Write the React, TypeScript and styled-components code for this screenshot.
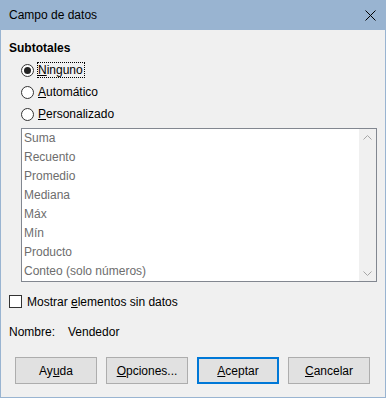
import React from "react";
import styled, { createGlobalStyle } from "styled-components";

const Global = createGlobalStyle`
  html, body { margin: 0; padding: 0; background: #f0f0f0; }
  body { font-family: "Segoe UI", "Liberation Sans", Arial, sans-serif; font-size: 12px; color: #000; }
`;

const Window = styled.div`
  width: 386px;
  height: 398px;
  box-sizing: border-box;
  border: 1px solid #99b4d1;
  border-top: none;
  background: #f0f0f0;
  display: flex;
  flex-direction: column;
`;

const TitleBar = styled.div`
  height: 30px;
  margin: 0 -1px;
  background: #99b4d1;
  display: flex;
  align-items: center;
  justify-content: space-between;
  padding: 0 10px 0 9px;
  box-sizing: border-box;
  font-size: 12px;
  color: #000;
`;

const Content = styled.div`
  flex: 1;
  display: flex;
  flex-direction: column;
  padding: 10px 8px 0 8px;
`;

const SectionTitle = styled.div`
  font-weight: bold;
  line-height: 16px;
  height: 16px;
`;

const RadioGroup = styled.div`
  display: flex;
  flex-direction: column;
  margin: 3px 0 0 12px;
`;

const RadioRow = styled.label`
  height: 22px;
  display: flex;
  align-items: center;
  gap: 3px;
`;

const RadioCircle = styled.span<{ $checked?: boolean }>`
  width: 13px;
  height: 13px;
  box-sizing: border-box;
  border-radius: 50%;
  border: 1px solid #333;
  background: #fff;
  display: flex;
  align-items: center;
  justify-content: center;
  &::after {
    content: "";
    width: 7px;
    height: 7px;
    border-radius: 50%;
    background: #222;
    display: ${(p) => (p.$checked ? "block" : "none")};
  }
`;

const LabelText = styled.span<{ $focus?: boolean }>`
  line-height: 14px;
  padding: 0 1px 0 0;
  border: 1px dotted ${(p) => (p.$focus ? "#000" : "transparent")};
`;

const U = styled.span`
  text-decoration: underline;
`;

const ListBox = styled.div`
  margin: 3px 0 0 12px;
  height: 154px;
  box-sizing: border-box;
  border: 1px solid #828790;
  background: #fff;
  display: flex;
`;

const ListItems = styled.div`
  flex: 1;
  display: flex;
  flex-direction: column;
  padding-left: 2px;
`;

const ListItem = styled.div`
  height: 19px;
  line-height: 19px;
  color: #6d6d6d;
`;

const ScrollBar = styled.div`
  width: 17px;
  background: #f0f0f0;
  display: flex;
  flex-direction: column;
  justify-content: space-between;
  align-items: center;
  padding: 6px 0 5px;
  box-sizing: border-box;
`;

const CheckRow = styled.label`
  margin-top: 13px;
  height: 13px;
  display: flex;
  align-items: center;
  gap: 5px;
`;

const CheckBox = styled.span`
  width: 13px;
  height: 13px;
  box-sizing: border-box;
  border: 1px solid #333;
  background: #fff;
`;

const NameRow = styled.div`
  margin-top: 16px;
  display: flex;
  line-height: 16px;
`;

const NameLabel = styled.span`
  width: 59px;
`;

const ButtonRow = styled.div`
  margin: 17px 0 0 6px;
  display: flex;
  gap: 9px;
`;

const Button = styled.button<{ $default?: boolean }>`
  width: 82px;
  height: 27px;
  box-sizing: border-box;
  font-family: inherit;
  font-size: 12px;
  color: #000;
  background: #e1e1e1;
  border: ${(p) => (p.$default ? "2px solid #0078d7" : "1px solid #adadad")};
  padding: 0;
  border-radius: 0;
`;

const Chevron = ({ up }: { up?: boolean }) => (
  <svg width="9" height="5" viewBox="0 0 9 5">
    <polyline
      points={up ? "0.5,4.5 4.5,0.5 8.5,4.5" : "0.5,0.5 4.5,4.5 8.5,0.5"}
      fill="none"
      stroke="#a6a6a6"
      strokeWidth="1"
    />
  </svg>
);

const items = [
  "Suma",
  "Recuento",
  "Promedio",
  "Mediana",
  "Máx",
  "Mín",
  "Producto",
  "Conteo (solo números)",
];

export default function App() {
  return (
    <>
      <Global />
      <Window>
        <TitleBar>
          <span>Campo de datos</span>
          <svg width="11" height="11" viewBox="0 0 11 11">
            <path d="M0.5 0.5 L10.5 10.5 M10.5 0.5 L0.5 10.5" stroke="#000" strokeWidth="1" />
          </svg>
        </TitleBar>
        <Content>
          <SectionTitle>Subtotales</SectionTitle>
          <RadioGroup>
            <RadioRow>
              <RadioCircle $checked />
              <LabelText $focus>
                <U>N</U>inguno
              </LabelText>
            </RadioRow>
            <RadioRow>
              <RadioCircle />
              <LabelText>
                <U>A</U>utomático
              </LabelText>
            </RadioRow>
            <RadioRow>
              <RadioCircle />
              <LabelText>
                <U>P</U>ersonalizado
              </LabelText>
            </RadioRow>
          </RadioGroup>
          <ListBox>
            <ListItems>
              {items.map((it) => (
                <ListItem key={it}>{it}</ListItem>
              ))}
            </ListItems>
            <ScrollBar>
              <Chevron up />
              <Chevron />
            </ScrollBar>
          </ListBox>
          <CheckRow>
            <CheckBox />
            <span>
              Mostrar <U>e</U>lementos sin datos
            </span>
          </CheckRow>
          <NameRow>
            <NameLabel>Nombre:</NameLabel>
            <span>Vendedor</span>
          </NameRow>
          <ButtonRow>
            <Button>
              Ay<U>u</U>da
            </Button>
            <Button>
              <U>O</U>pciones...
            </Button>
            <Button $default>
              <U>A</U>ceptar
            </Button>
            <Button>
              <U>C</U>ancelar
            </Button>
          </ButtonRow>
        </Content>
      </Window>
    </>
  );
}
